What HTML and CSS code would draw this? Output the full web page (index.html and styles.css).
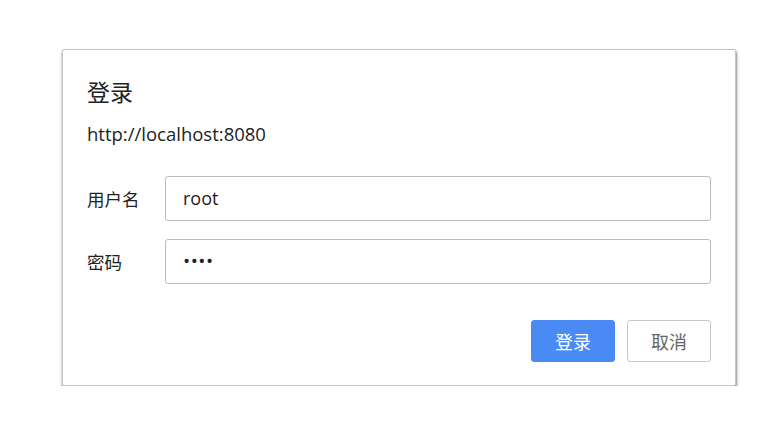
FILE: index.html
```html
<!DOCTYPE html>
<html lang="zh-CN">
<head>
<meta charset="utf-8">
<title>登录</title>
<link rel="stylesheet" href="styles.css">
</head>
<body>
<div class="dialog">
  <div class="title">登录</div>
  <div class="url">http://localhost:8080</div>
  <div class="form">
    <div class="row">
      <label class="label">用户名</label>
      <div class="input">root</div>
    </div>
    <div class="row">
      <label class="label">密码</label>
      <div class="input pwd">••••</div>
    </div>
  </div>
  <div class="actions">
    <button class="btn primary">登录</button>
    <button class="btn">取消</button>
  </div>
</div>
</body>
</html>
```
FILE: styles.css
```css
html, body {
  margin: 0;
  padding: 0;
  background: #ffffff;
}
body {
  font-family: "Noto Sans CJK SC", "Noto Sans", sans-serif;
  color: #222;
  padding-top: 49px;
  padding-left: 62px;
}
.dialog {
  box-sizing: border-box;
  width: 674px;
  height: 337px;
  border: 1px solid #c4c4c4;
  border-radius: 2px;
  box-shadow: 0.5px 2px 2.5px rgba(0,0,0,0.45);
  padding: 27px 24px 0 24px;
  background: #fff;
}
.title {
  font-size: 23px;
  line-height: 28px;
  color: #222;
}
.url {
  margin-top: 17px;
  font-family: "Open Sans", "Noto Sans CJK SC", sans-serif;
  font-size: 18.5px;
  line-height: 24px;
  color: #222;
}
.form {
  margin-top: 30px;
  display: flex;
  flex-direction: column;
  gap: 18px;
}
.row {
  display: flex;
  align-items: center;
}
.label {
  width: 78px;
  font-size: 17.5px;
  color: #222;
}
.input {
  box-sizing: border-box;
  flex: 1;
  height: 45px;
  border: 1px solid #bcbcbc;
  border-radius: 3px;
  padding-left: 17px;
  font-family: "Open Sans", "Noto Sans", sans-serif;
  font-size: 18px;
  line-height: 43px;
  color: #222;
}
.pwd {
  font-size: 19px;
  letter-spacing: 0.5px;
}
.actions {
  margin-top: 36px;
  display: flex;
  justify-content: flex-end;
  gap: 12px;
}
.btn {
  box-sizing: border-box;
  width: 84px;
  height: 42px;
  border: 1px solid #c8c8c8;
  border-radius: 3px;
  background: #fff;
  color: #666;
  font-family: "Noto Sans CJK SC", sans-serif;
  font-size: 18px;
  padding: 0;
}
.btn.primary {
  background: #4a8af4;
  border-color: #4a8af4;
  color: #fff;
}
```
